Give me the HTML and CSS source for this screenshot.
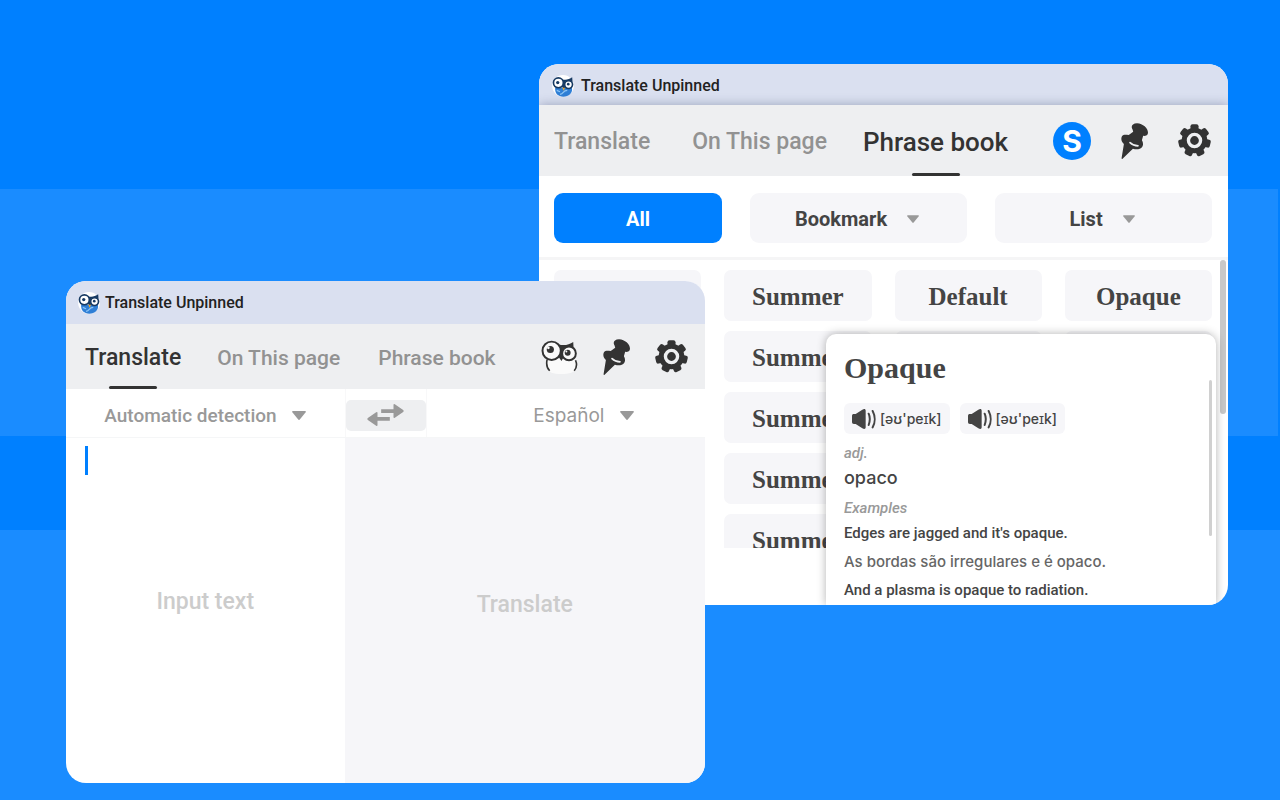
FILE: index.html
```html
<!DOCTYPE html>
<html lang="en">

<head>
  <meta charset="UTF-8" />
  <meta name="viewport" content="width=device-width, initial-scale=1" />
  <title>Translate Unpinned</title>
  <link rel="stylesheet" href="styles.css">
</head>

<body>
  <svg class="sprite" aria-hidden="true">
    <symbol id="pin" viewBox="0 0 84 112">
      <path fill="#333" d="M36 20C30 12 34 1 50 1C68 2 84 16 84 30C84 38 76 41 69 40L65 54C70 62 70 72 63 78C55 84 44 82 37 80L4 112C2 112 2 110 2 108L9 65C1 60-1 48 3 41C7 35 14 36 24 37L38 27Z" />
      <path fill="none" stroke="#eeeff1" stroke-width="5" stroke-linecap="round" d="M28 61C34 67 43 71 53 71" />
    </symbol>
    <symbol id="gear" viewBox="0 0 98 98">
      <g fill="#333">
        <circle cx="49" cy="49" r="38" />
        <rect id="tooth" x="37" y="1" width="24" height="24" rx="6" />
        <use href="#tooth" transform="rotate(51.43 49 49)" />
        <use href="#tooth" transform="rotate(102.86 49 49)" />
        <use href="#tooth" transform="rotate(154.29 49 49)" />
        <use href="#tooth" transform="rotate(205.71 49 49)" />
        <use href="#tooth" transform="rotate(257.14 49 49)" />
        <use href="#tooth" transform="rotate(308.57 49 49)" />
      </g>
      <circle cx="49" cy="49" r="18" fill="#333" stroke="#eeeff1" stroke-width="10" />
    </symbol>
    <symbol id="owl" viewBox="0 0 112 104">
      <path fill="#fafafa" d="M18 58H104C112 76 108 94 92 100C76 105 46 105 32 100C16 92 14 74 18 58Z" />
      <path fill="none" stroke="#333" stroke-width="5" d="M18 60C15 74 18 86 26 94M105 62C110 74 108 86 101 94" />
      <path fill="#333" d="M54 14C72 18 86 14 98 6L99 24L76 40L62 64L52 50Z" />
      <circle cx="32" cy="33" r="28" fill="#fafafa" stroke="#333" stroke-width="6" />
      <circle cx="85" cy="41" r="21" fill="#fafafa" stroke="#333" stroke-width="6" />
      <circle cx="28" cy="29" r="11" fill="#333" />
      <circle cx="81" cy="39" r="9" fill="#333" />
      <circle cx="22" cy="24" r="4" fill="#fafafa" />
      <circle cx="77" cy="35" r="3" fill="#fafafa" />
    </symbol>
    <symbol id="logo" viewBox="0 0 66 70">
      <circle cx="33" cy="36" r="33" fill="#fff" />
      <path fill="#2f7fd6" d="M9 42H60C64 58 50 69 34 69C18 69 8 60 9 42Z" />
      <path fill="none" stroke="#8cc4f5" stroke-width="4" d="M24 62C36 60 32 50 46 50M14 50L24 54" />
      <path fill="#173a63" d="M30 16C42 20 52 16 61 10L62 24L40 42L34 44L28 36Z" />
      <circle cx="19" cy="27" r="15" fill="#fff" stroke="#173a63" stroke-width="5" />
      <circle cx="50" cy="32" r="12" fill="#fff" stroke="#173a63" stroke-width="5" />
      <circle cx="17" cy="26" r="5" fill="#173a63" />
      <circle cx="49" cy="31" r="4" fill="#173a63" />
      <path fill="#f5a623" d="M31 42H39L35 51Z" />
    </symbol>
    <symbol id="speaker" viewBox="0 0 72 60">
      <path fill="#444" d="M6 15H11L31 2C37-1 41 0 41 5V55C41 60 37 61 31 58L11 45H6C2 45 0 43 0 39V21C0 17 2 15 6 15Z" />
      <path fill="none" stroke="#444" stroke-width="6" stroke-linecap="round" d="M50 14C54 23 54 37 50 48M62 6C70 21 70 41 62 55" />
    </symbol>
    <symbol id="arrow" viewBox="0 0 14 9">
      <path fill="#999" d="M1 0H13Q14.500 0 13.500 1.500L8 8.300Q7 9.500 6 8.300L.5 1.500Q-.5 0 1 0Z" />
    </symbol>
  </svg>

  <main class="desktop">
    <section class="window phrase-window">
      <header class="title-bar">
        <svg class="logo"><use href="#logo" /></svg>
        <span>Translate Unpinned</span>
      </header>
      <nav class="nav">
        <a class="tab" href="#translate">Translate</a>
        <a class="tab" href="#page">On This page</a>
        <a class="tab active" href="#phrases">Phrase book</a>
        <div class="tools">
          <button class="account" type="button" aria-label="Account">S</button>
          <button type="button" aria-label="Pin"><svg class="pin"><use href="#pin" /></svg></button>
          <button type="button" aria-label="Settings"><svg class="gear"><use href="#gear" /></svg></button>
        </div>
      </nav>
      <div class="filters">
        <button class="filter all" type="button">All</button>
        <label class="filter">
          <select aria-label="Bookmark"><option>Bookmark</option></select>
          <svg class="arrow small"><use href="#arrow" /></svg>
        </label>
        <label class="filter">
          <select aria-label="List"><option>List</option></select>
          <svg class="arrow small"><use href="#arrow" /></svg>
        </label>
      </div>
      <div class="phrases">
        <div class="phrase-list">
          <button type="button"></button>
          <button type="button">Summer</button>
          <button type="button">Default</button>
          <button type="button">Opaque</button>
          <button type="button"></button>
          <button type="button">Summer</button>
          <button type="button"></button>
          <button type="button"></button>
          <button type="button"></button>
          <button type="button">Summer</button>
          <button type="button"></button>
          <button type="button"></button>
          <button type="button"></button>
          <button type="button">Summer</button>
          <button type="button"></button>
          <button type="button"></button>
          <button type="button"></button>
          <button type="button">Summer</button>
          <button type="button"></button>
          <button type="button"></button>
        </div>
        <span class="scroll-thumb"></span>
      </div>

      <article class="popup">
        <h2>Opaque</h2>
        <div class="sounds">
          <button type="button"><svg class="speaker"><use href="#speaker" /></svg>[əʊ'peɪk]</button>
          <button type="button"><svg class="speaker"><use href="#speaker" /></svg>[əʊ'peɪk]</button>
        </div>
        <p class="note">adj.</p>
        <p class="meaning">opaco</p>
        <p class="note examples">Examples</p>
        <p class="source">Edges are jagged and it's opaque.</p>
        <p class="result">As bordas são irregulares e é opaco.</p>
        <p class="source">And a plasma is opaque to radiation.</p>
        <span class="popup-thumb"></span>
      </article>
    </section>

    <section class="window translate-window">
      <header class="title-bar">
        <svg class="logo"><use href="#logo" /></svg>
        <span>Translate Unpinned</span>
      </header>
      <nav class="nav">
        <a class="tab active" href="#translate">Translate</a>
        <a class="tab" href="#page">On This page</a>
        <a class="tab" href="#phrases">Phrase book</a>
        <div class="tools">
          <button type="button" aria-label="Account"><svg class="owl"><use href="#owl" /></svg></button>
          <button type="button" aria-label="Pin"><svg class="pin"><use href="#pin" /></svg></button>
          <button type="button" aria-label="Settings"><svg class="gear"><use href="#gear" /></svg></button>
        </div>
      </nav>
      <div class="languages">
        <label class="language">
          <select aria-label="From"><option>Automatic detection</option></select>
          <svg class="arrow"><use href="#arrow" /></svg>
        </label>
        <div class="swap-cell">
          <button class="swap" type="button" aria-label="Swap languages">
            <svg viewBox="0 0 110 66" width="37" height="22">
              <path fill="#999" d="M42 16H79V3Q79-1 83 1L108 18Q111 21 108 24L83 41Q79 43 79 39V27H42ZM68 39H31V27Q31 22 27 25L2 42Q-1 45 2 48L27 65Q31 67 31 63V50H68Z" />
            </svg>
          </button>
        </div>
        <label class="language target">
          <select aria-label="To"><option>Español</option></select>
          <svg class="arrow"><use href="#arrow" /></svg>
        </label>
      </div>
      <div class="panes">
        <div class="input-pane">
          <textarea aria-label="Input text" placeholder="Input text"></textarea>
          <span class="caret"></span>
        </div>
        <output class="output-pane">Translate</output>
      </div>
    </section>
  </main>
</body>

</html>
```

FILE: styles.css
```css
* {
  box-sizing: border-box;
}

body {
  margin: 0;
  font-family: Roboto, "Liberation Sans", sans-serif;
  font-weight: 500;
  color: #333;
  background: #0080ff;
}

button,
select,
textarea {
  margin: 0;
  padding: 0;
  border: none;
  outline: none;
  background: none;
  color: inherit;
  font: inherit;
}

button,
select {
  cursor: pointer;
}

select {
  appearance: none;
}

p,
h2 {
  margin: 0;
}

.sprite {
  position: absolute;
  width: 0;
  height: 0;
}

.desktop {
  position: relative;
  min-height: max(100vh, 800px);
  overflow: hidden;
  background:
    linear-gradient(#1a8cff, #1a8cff) 0 189px / calc(100% - 2px) 247px no-repeat,
    linear-gradient(transparent 530px, #1a8cff 530px);
}

/* windows */
.window {
  position: absolute;
  overflow: hidden;
  border-radius: 20px;
  background: #fff;
}

.phrase-window {
  top: 64px;
  right: 52px;
  width: calc(50% + 49px);
}

.translate-window {
  top: 281px;
  left: 66px;
  width: calc(50% - 1px);
}

.title-bar {
  display: flex;
  align-items: center;
  gap: 5px;
  height: 43px;
  padding-left: 12px;
  background: #dae0f0;
  color: #222;
  font-size: 16px;
}

.phrase-window .title-bar {
  gap: 7px;
  height: 41px;
  padding: 2px 0 0 13px;
}

.logo {
  width: 22px;
  height: 23px;
}

.nav {
  position: relative;
  display: flex;
  gap: 38px;
  height: 65px;
  padding: 0 17px 0 21px;
  background: #eeeff1;
  font-size: 21px;
}

.phrase-window .nav {
  gap: 42px;
  height: 71px;
  padding-left: 15px;
  box-shadow: 0 0 10px rgba(60, 70, 110, .4);
  font-size: 23px;
}

.tab {
  display: flex;
  align-items: center;
  justify-content: center;
  padding-top: 2px;
  color: #929292;
  text-decoration: none;
  white-space: nowrap;
}

.tab.active {
  position: relative;
  margin: 0 -2px;
  color: #333;
  font-size: 23px;
}

.phrase-window .tab.active {
  margin: 0 -6px;
  font-size: 26px;
}

.tab.active::after {
  content: "";
  position: absolute;
  bottom: 0;
  width: 48px;
  height: 3px;
  border-radius: 2px;
  background: #333;
}

.tools {
  display: flex;
  align-items: center;
  gap: 25px;
  margin-left: auto;
}

.phrase-window .tools {
  gap: 30px;
}

.tools svg {
  display: block;
}

.pin {
  width: 27px;
  height: 36px;
}

.gear {
  width: 33px;
  height: 33px;
}

.owl {
  width: 37px;
  height: 34px;
}

.account {
  width: 38px;
  height: 38px;
  border-radius: 50%;
  background: #0080ff;
  color: #fff;
  font: bold 30px/38px Inter, sans-serif;
}

/* phrase book */
.filters {
  position: relative;
  display: grid;
  grid-template-columns: 168fr 217fr 217fr;
  gap: 28px;
  padding: 17px 16px 14px 15px;
  border-bottom: 3px solid #f5f5f6;
  background: #fff;
}

.filter {
  display: flex;
  align-items: center;
  justify-content: center;
  gap: 19px;
  height: 50px;
  padding: 2px 3px 0 0;
  border-radius: 9px;
  background: #f6f6f9;
  color: #444;
  font-size: 20px;
  font-weight: 700;
}

.filter.all {
  padding-right: 0;
  background: #0080ff;
  color: #fff;
}

.arrow {
  width: 14px;
  height: 9px;
}

.arrow.small {
  width: 12px;
  height: 8px;
}

.phrases {
  position: relative;
  padding: 10px 16px 57px 15px;
}

.phrase-list {
  display: grid;
  grid-template-columns: repeat(4, 1fr);
  grid-auto-rows: 51px;
  gap: 10px 23px;
  height: 278px;
  overflow: hidden;
}

.phrase-list button {
  padding-top: 2px;
  border-radius: 7px;
  background: #f6f6f9;
  color: #444;
  font: bold 25px/49px "Liberation Serif", serif;
}

.scroll-thumb {
  position: absolute;
  top: 0;
  right: 2px;
  width: 6px;
  height: 154px;
  border-radius: 3px;
  background: #c8c8c8;
}

.popup {
  position: absolute;
  top: 270px;
  right: 12px;
  bottom: 0;
  width: 390px;
  padding: 14px 18px 0;
  border-radius: 10px 10px 0 0;
  background: #fff;
  box-shadow: 0 0 10px rgba(0, 0, 0, .3);
  color: #444;
  font-size: 15px;
}

.popup h2 {
  font: bold 30px/40px "Liberation Serif", serif;
}

.sounds {
  display: flex;
  gap: 10px;
  margin: 15px 0 7px;
}

.sounds button {
  display: flex;
  align-items: center;
  gap: 4px;
  height: 31px;
  padding: 0 8px;
  border-radius: 6px;
  background: #f6f6f9;
  font: 500 14px/31px Inter, sans-serif;
}

.speaker {
  width: 24px;
  height: 20px;
}

.note {
  color: #999;
  font-style: italic;
  line-height: 24px;
}

.meaning {
  font: 500 18px/26px Inter, sans-serif;
}

.examples {
  margin-top: 5px;
}

.source {
  line-height: 27px;
}

.result {
  color: #666;
  font: 500 15px/30px Inter, sans-serif;
}

.popup-thumb {
  position: absolute;
  top: 46px;
  right: 4px;
  width: 3px;
  height: 156px;
  border-radius: 2px;
  background: #d0d0d0;
}

/* translate */
.languages,
.panes {
  display: grid;
  grid-template-columns: 1fr 82px 1fr;
}

.languages {
  height: 49px;
  border-bottom: 1px solid #f5f6f7;
}

.language {
  display: flex;
  align-items: center;
  justify-content: center;
  gap: 15px;
  padding-top: 4px;
  color: #999;
  font-size: 19px;
}

.target {
  padding-left: 36px;
  font-family: Inter, sans-serif;
  font-weight: 400;
}

.swap-cell {
  display: flex;
  align-items: center;
  padding-top: 4px;
  border: solid #f8f8f9;
  border-width: 0 1px;
}

.swap {
  display: flex;
  align-items: center;
  justify-content: center;
  width: 100%;
  height: 31px;
  border-radius: 5px;
  background: #eeeff1;
}

.panes {
  height: 345px;
  color: #ccc;
  font-size: 23px;
}

.input-pane {
  position: relative;
}

.input-pane textarea {
  display: block;
  width: 100%;
  height: 100%;
  padding: 149px 20px 0;
  color: #333;
  line-height: 30px;
  resize: none;
}

.input-pane textarea::placeholder {
  color: #ccc;
  text-align: center;
}

.caret {
  position: absolute;
  top: 8px;
  left: 19px;
  width: 3px;
  height: 29px;
  background: #0080ff;
}

.output-pane {
  display: flex;
  align-items: center;
  justify-content: center;
  grid-column: span 2;
  padding-bottom: 12px;
  background: #f6f6f9;
}
```
